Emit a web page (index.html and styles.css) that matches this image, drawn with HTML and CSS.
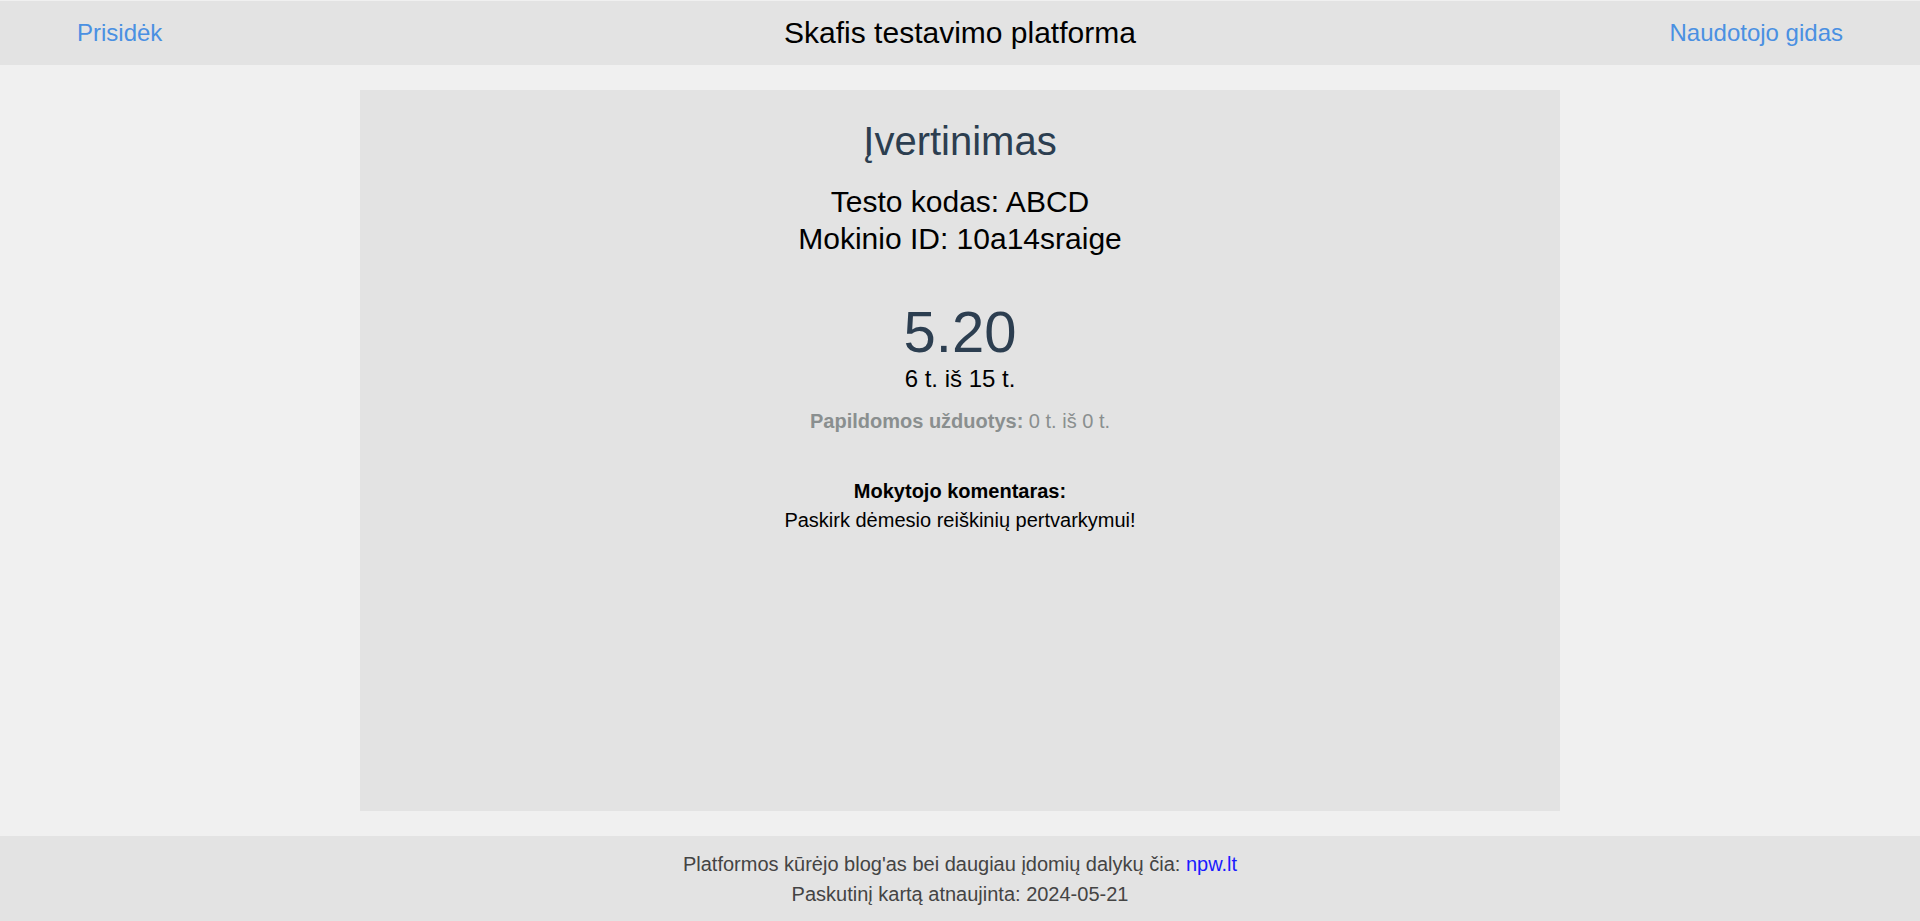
FILE: index.html
```html
<!DOCTYPE html>
<html lang="lt">
<head>
<meta charset="utf-8">
<title>Skafis testavimo platforma</title>
<link rel="stylesheet" href="styles.css">
</head>
<body>
<div class="page">
  <header class="topbar">
    <a class="nav-link nav-left" href="#">Prisidėk</a>
    <div class="brand">Skafis testavimo platforma</div>
    <a class="nav-link nav-right" href="#">Naudotojo gidas</a>
  </header>
  <main class="main">
    <section class="card">
      <h1 class="card-title">Įvertinimas</h1>
      <div class="info">
        <div class="info-line">Testo kodas: ABCD</div>
        <div class="info-line">Mokinio ID: 10a14sraige</div>
      </div>
      <div class="score">5.20</div>
      <div class="points">6 t. iš 15 t.</div>
      <div class="extra"><strong>Papildomos užduotys:</strong> 0 t. iš 0 t.</div>
      <div class="comment">
        <div class="comment-label">Mokytojo komentaras:</div>
        <div class="comment-text">Paskirk dėmesio reiškinių pertvarkymui!</div>
      </div>
    </section>
  </main>
  <footer class="footer">
    <div class="footer-line">Platformos kūrėjo blog'as bei daugiau įdomių dalykų čia: <a class="footer-link" href="#">npw.lt</a></div>
    <div class="footer-line">Paskutinį kartą atnaujinta: 2024-05-21</div>
  </footer>
</div>
</body>
</html>
```
FILE: styles.css
```css
html, body {
  margin: 0;
  padding: 0;
}
body {
  background: #f0f0f0;
  font-family: "Liberation Sans", Arial, sans-serif;
  color: #000;
}
.page {
  min-height: 100vh;
  display: flex;
  flex-direction: column;
}
.topbar {
  margin-top: 1px;
  height: 64px;
  background: #e3e3e3;
  display: grid;
  grid-template-columns: 1fr auto 1fr;
  align-items: center;
  padding: 0 77px;
}
.nav-link {
  color: #4a90e2;
  text-decoration: none;
  font-size: 24px;
}
.nav-left { justify-self: start; }
.nav-right { justify-self: end; }
.brand {
  font-size: 30px;
  color: #000;
}
.main {
  flex: 1;
  display: flex;
  flex-direction: column;
  padding: 25px 0;
}
.card {
  flex: 1;
  width: 1200px;
  margin: 0 auto;
  background: #e3e3e3;
  text-align: center;
}
.card-title {
  margin: 28px 0 0;
  font-size: 40px;
  line-height: 46px;
  font-weight: normal;
  color: #2c3e50;
}
.info {
  margin-top: 19px;
  font-size: 30px;
  line-height: 37px;
}
.score {
  margin-top: 42px;
  font-size: 58px;
  line-height: 66px;
  color: #2c3e50;
}
.points {
  font-size: 24px;
  line-height: 28px;
}
.extra {
  margin-top: 17px;
  font-size: 20px;
  line-height: 23px;
  color: #8a8f8f;
}
.comment {
  margin-top: 44px;
  font-size: 20px;
  line-height: 29px;
}
.comment-label {
  font-weight: bold;
}
.footer {
  height: 85px;
  box-sizing: border-box;
  background: #e3e3e3;
  display: flex;
  flex-direction: column;
  justify-content: center;
  align-items: center;
  font-size: 20px;
  line-height: 30px;
  color: #444;
}
.footer-link {
  color: #1a1aff;
  text-decoration: none;
}
```
